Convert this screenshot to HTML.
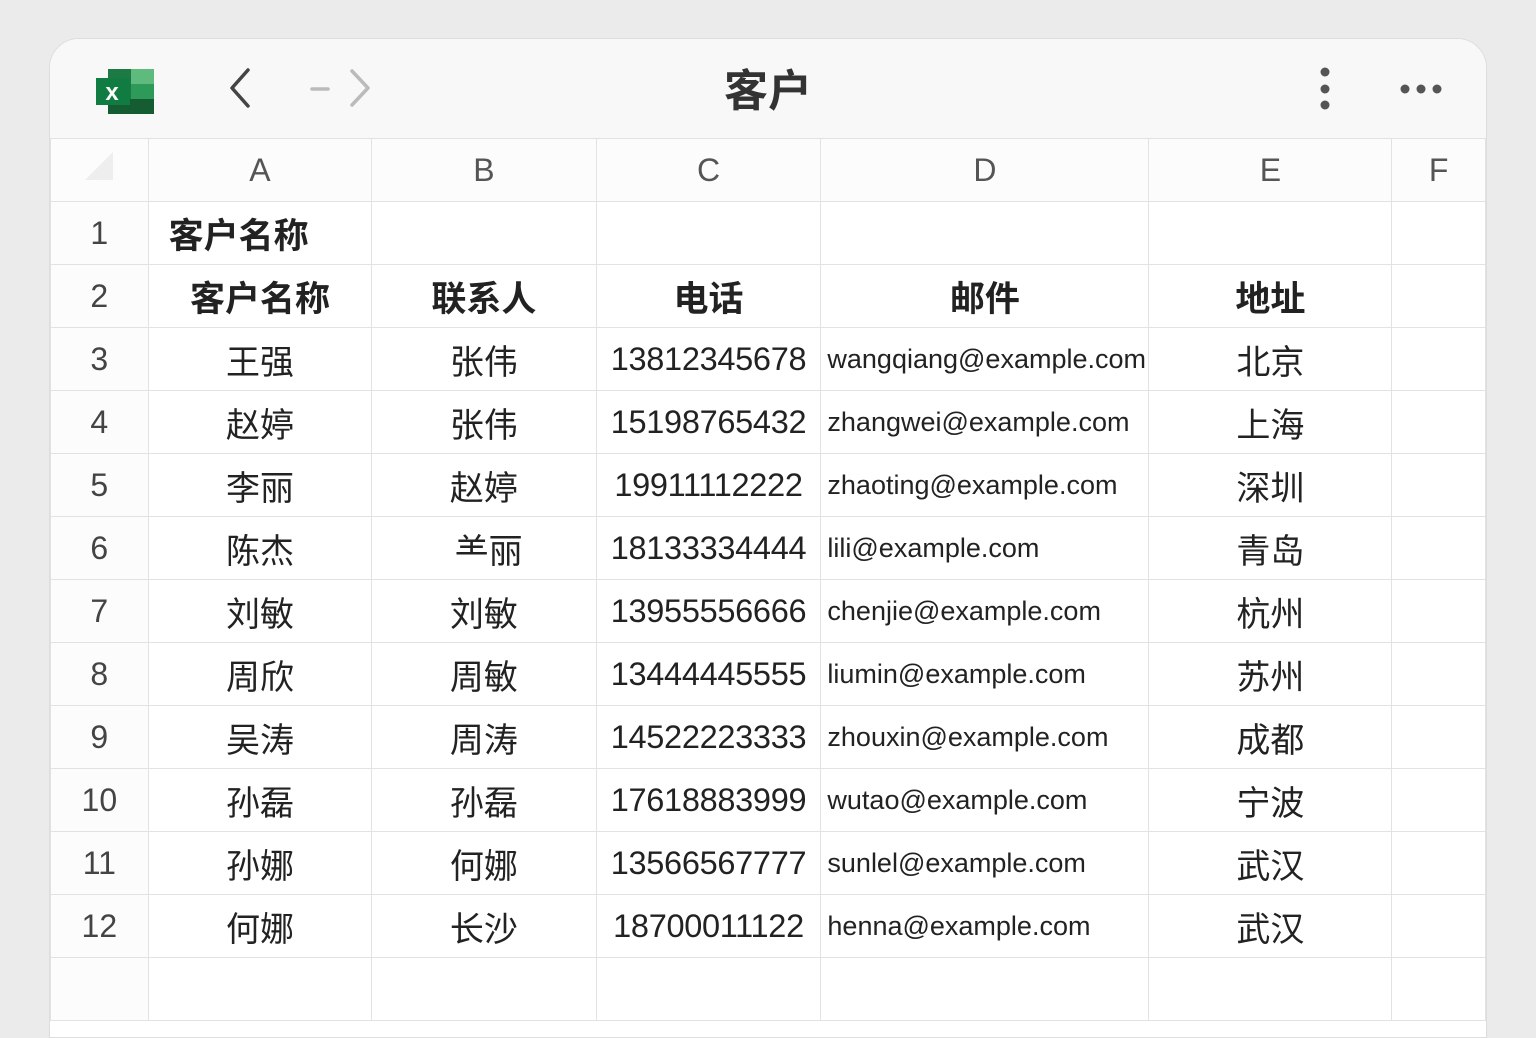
<!DOCTYPE html>
<html><head><meta charset="utf-8"><style>
*{margin:0;padding:0;box-sizing:border-box}
body{width:1536px;height:1024px;background:#ebebeb;overflow:hidden;position:relative;font-family:"Liberation Sans","Noto Sans CJK SC",sans-serif;color:#222}
.card{position:absolute;left:49px;top:38px;width:1438px;height:1000px;background:#fff;border-radius:30px 30px 0 0;border:1px solid #ddd;overflow:hidden}
.top{position:absolute;left:0;top:0;width:100%;height:100px;background:#f8f8f8;border-bottom:1px solid #e0e0e0}
.title{position:absolute;left:0;width:100%;top:16px;text-align:center;font-size:44px;font-weight:bold;color:#333}
table{position:absolute;left:0;top:99px;border-collapse:collapse;table-layout:fixed}
td{border:1.5px solid #e2e2e2;height:63px;text-align:center;font-size:34px;white-space:nowrap;overflow:hidden;padding:0}
tr.h td{background:#fcfcfc;color:#555;font-size:32px;height:63px}
td.n{background:#fcfcfc;color:#444;font-size:32px}
td.num{font-size:32.5px;letter-spacing:-0.3px}
td.em{font-size:27px;text-align:left;padding-left:6px}
td.b{font-weight:bold;font-size:35px}
</style></head><body>
<div class="card">
<div class="top">
<svg style="position:absolute;left:46px;top:30px" width="60" height="46" viewBox="0 0 60 46">
<rect x="12" y="0" width="46" height="45" fill="#1e7a45"/>
<rect x="35" y="0" width="23" height="15" fill="#5fba7d"/>
<rect x="35" y="15" width="23" height="15" fill="#2e9a5a"/>
<rect x="12" y="30" width="46" height="15" fill="#155c33"/>
<rect x="0" y="9" width="34" height="27" fill="#107c41"/>
<text x="16" y="31" font-size="24" font-weight="bold" fill="#fff" text-anchor="middle" font-family="Liberation Sans">x</text>
</svg>
<svg style="position:absolute;left:176px;top:28px" width="150" height="44" viewBox="0 0 150 44">
<path d="M22 3 L6 21 L22 39" stroke="#444" stroke-width="3.5" fill="none" stroke-linecap="round" stroke-linejoin="round"/>
<path d="M86 22 H102" stroke="#bbb" stroke-width="3.5" stroke-linecap="round"/>
<path d="M126 4 L142 21 L126 38" stroke="#bbb" stroke-width="3.5" fill="none" stroke-linecap="round" stroke-linejoin="round"/>
</svg>
<div class="title">客户</div>
<svg style="position:absolute;left:1262px;top:28px" width="150" height="44" viewBox="0 0 150 44">
<circle cx="13" cy="5" r="4.5" fill="#555"/><circle cx="13" cy="22" r="4.5" fill="#555"/><circle cx="13" cy="38" r="4.5" fill="#555"/>
<circle cx="93" cy="22" r="4.5" fill="#555"/><circle cx="109" cy="22" r="4.5" fill="#555"/><circle cx="125" cy="22" r="4.5" fill="#555"/>
</svg>
</div>
<table>
<colgroup><col style="width:98px"><col style="width:224px"><col style="width:225px"><col style="width:225px"><col style="width:328px"><col style="width:244px"><col style="width:94px"></colgroup>
<tr class="h"><td><svg width="40" height="40"><path d="M34 6 L34 34 L6 34 Z" fill="#eee"/></svg></td><td>A</td><td>B</td><td>C</td><td>D</td><td>E</td><td>F</td></tr>
<tr><td class="n">1</td><td class="b" style="text-align:left;padding-left:20px">客户名称</td><td></td><td></td><td></td><td></td><td></td></tr>
<tr><td class="n">2</td><td class="b">客户名称</td><td class="b">联系人</td><td class="b">电话</td><td class="b">邮件</td><td class="b">地址</td><td></td></tr>
<tr><td class="n">3</td><td>王强</td><td>张伟</td><td class="num">13812345678</td><td class="em">wangqiang@example.com</td><td>北京</td><td></td></tr>
<tr><td class="n">4</td><td>赵婷</td><td>张伟</td><td class="num">15198765432</td><td class="em">zhangwei@example.com</td><td>上海</td><td></td></tr>
<tr><td class="n">5</td><td>李丽</td><td>赵婷</td><td class="num">19911112222</td><td class="em">zhaoting@example.com</td><td>深圳</td><td></td></tr>
<tr><td class="n">6</td><td>陈杰</td><td>&nbsp;⺷丽</td><td class="num">18133334444</td><td class="em">lili@example.com</td><td>青岛</td><td></td></tr>
<tr><td class="n">7</td><td>刘敏</td><td>刘敏</td><td class="num">13955556666</td><td class="em">chenjie@example.com</td><td>杭州</td><td></td></tr>
<tr><td class="n">8</td><td>周欣</td><td>周敏</td><td class="num">13444445555</td><td class="em">liumin@example.com</td><td>苏州</td><td></td></tr>
<tr><td class="n">9</td><td>吴涛</td><td>周涛</td><td class="num">14522223333</td><td class="em">zhouxin@example.com</td><td>成都</td><td></td></tr>
<tr><td class="n">10</td><td>孙磊</td><td>孙磊</td><td class="num">17618883999</td><td class="em">wutao@example.com</td><td>宁波</td><td></td></tr>
<tr><td class="n">11</td><td>孙娜</td><td>何娜</td><td class="num">13566567777</td><td class="em">sunlel@example.com</td><td>武汉</td><td></td></tr>
<tr><td class="n">12</td><td>何娜</td><td>长沙</td><td class="num">18700011122</td><td class="em">henna@example.com</td><td>武汉</td><td></td></tr>
<tr><td class="n"></td><td></td><td></td><td></td><td></td><td></td><td></td></tr>
</table>
</div>
</body></html>
